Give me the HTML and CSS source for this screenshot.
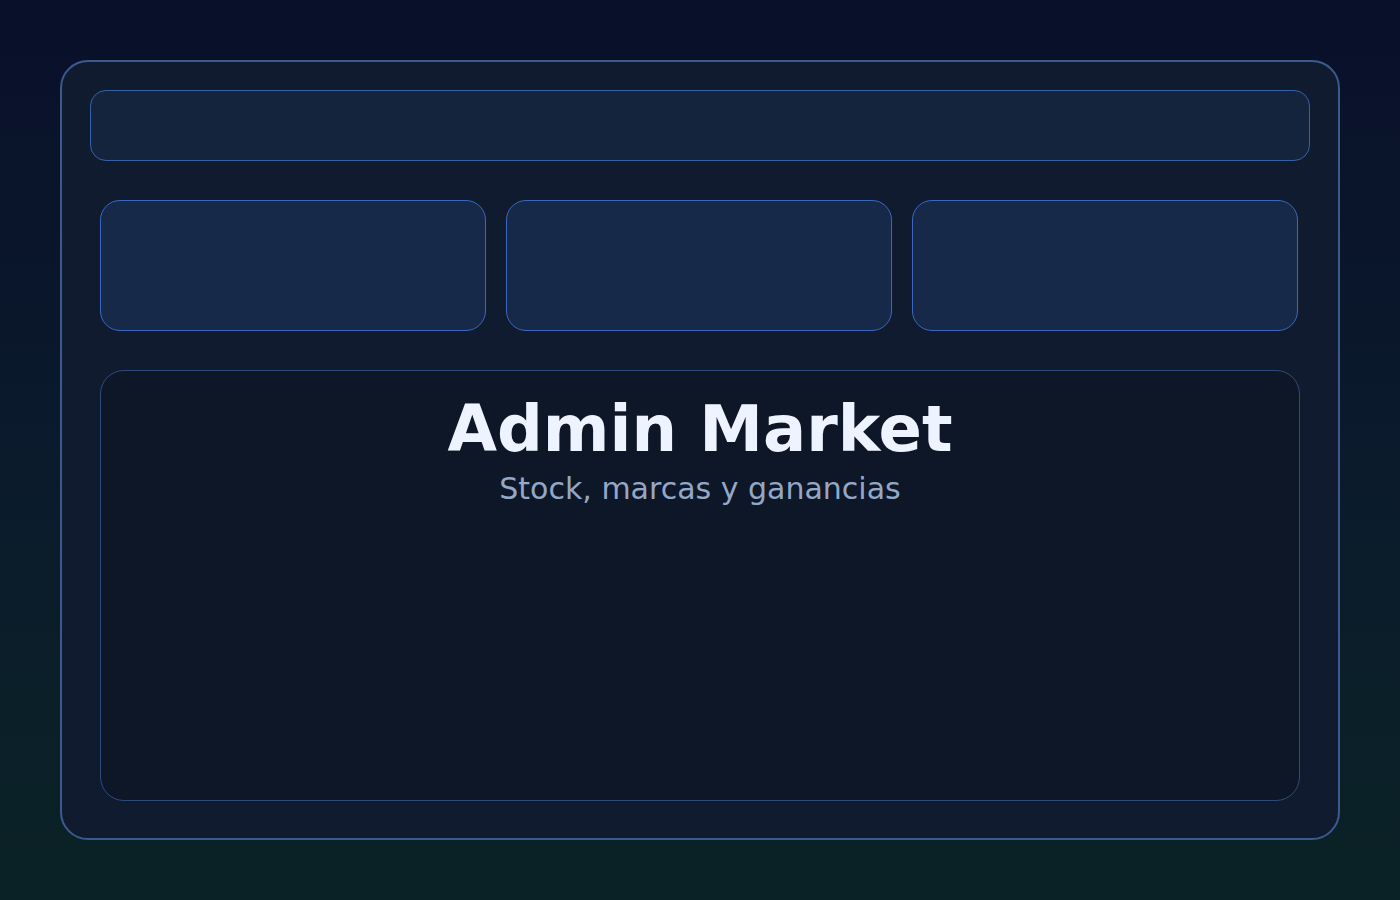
FILE: index.html
```html
<!DOCTYPE html>
<html lang="es">
<head>
<meta charset="utf-8">
<title>Admin Market</title>
<link rel="stylesheet" href="styles.css">
</head>
<body>
<div class="frame">
  <div class="topbar"></div>
  <div class="inner">
    <div class="cards">
      <div class="card"></div>
      <div class="card"></div>
      <div class="card"></div>
    </div>
    <div class="panel">
      <h1 class="title">Admin Market</h1>
      <p class="subtitle">Stock, marcas y ganancias</p>
    </div>
  </div>
</div>
</body>
</html>
```

FILE: styles.css
```css
html, body {
  margin: 0;
  height: 100%;
}
body {
  background: linear-gradient(180deg, #09102a 0%, #0b1a2c 50%, #0a2226 100%);
  padding: 60px;
  box-sizing: border-box;
  font-family: "DejaVu Sans", sans-serif;
}
.frame {
  box-sizing: border-box;
  height: 780px;
  border: 2px solid #3b5a8f;
  border-radius: 28px;
  background: #111b30;
  padding: 28px 28px 37px;
  display: flex;
  flex-direction: column;
  gap: 39px;
}
.topbar {
  box-sizing: border-box;
  height: 71px;
  border: 1px solid #3561a8;
  border-radius: 16px;
  background: #14243c;
  flex: none;
}
.inner {
  flex: 1;
  padding: 0 10px;
  display: flex;
  flex-direction: column;
  gap: 39px;
}
.cards {
  display: grid;
  grid-template-columns: repeat(3, 1fr);
  gap: 20px;
  height: 131px;
  padding-right: 2px;
}
.card {
  box-sizing: border-box;
  border: 1px solid #3a68c0;
  border-radius: 20px;
  background: #172948;
}
.panel {
  flex: 1;
  box-sizing: border-box;
  border: 1px solid #2e4a7c;
  border-radius: 24px;
  background: #0e1728;
  display: flex;
  flex-direction: column;
  align-items: center;
  padding-top: 18px;
}
.title {
  margin: 0;
  font-size: 64px;
  font-weight: bold;
  line-height: 80px;
  color: #eef4ff;
}
.subtitle {
  margin: 2px 0 0;
  font-size: 30px;
  line-height: 36px;
  color: #94a8c6;
}
```
